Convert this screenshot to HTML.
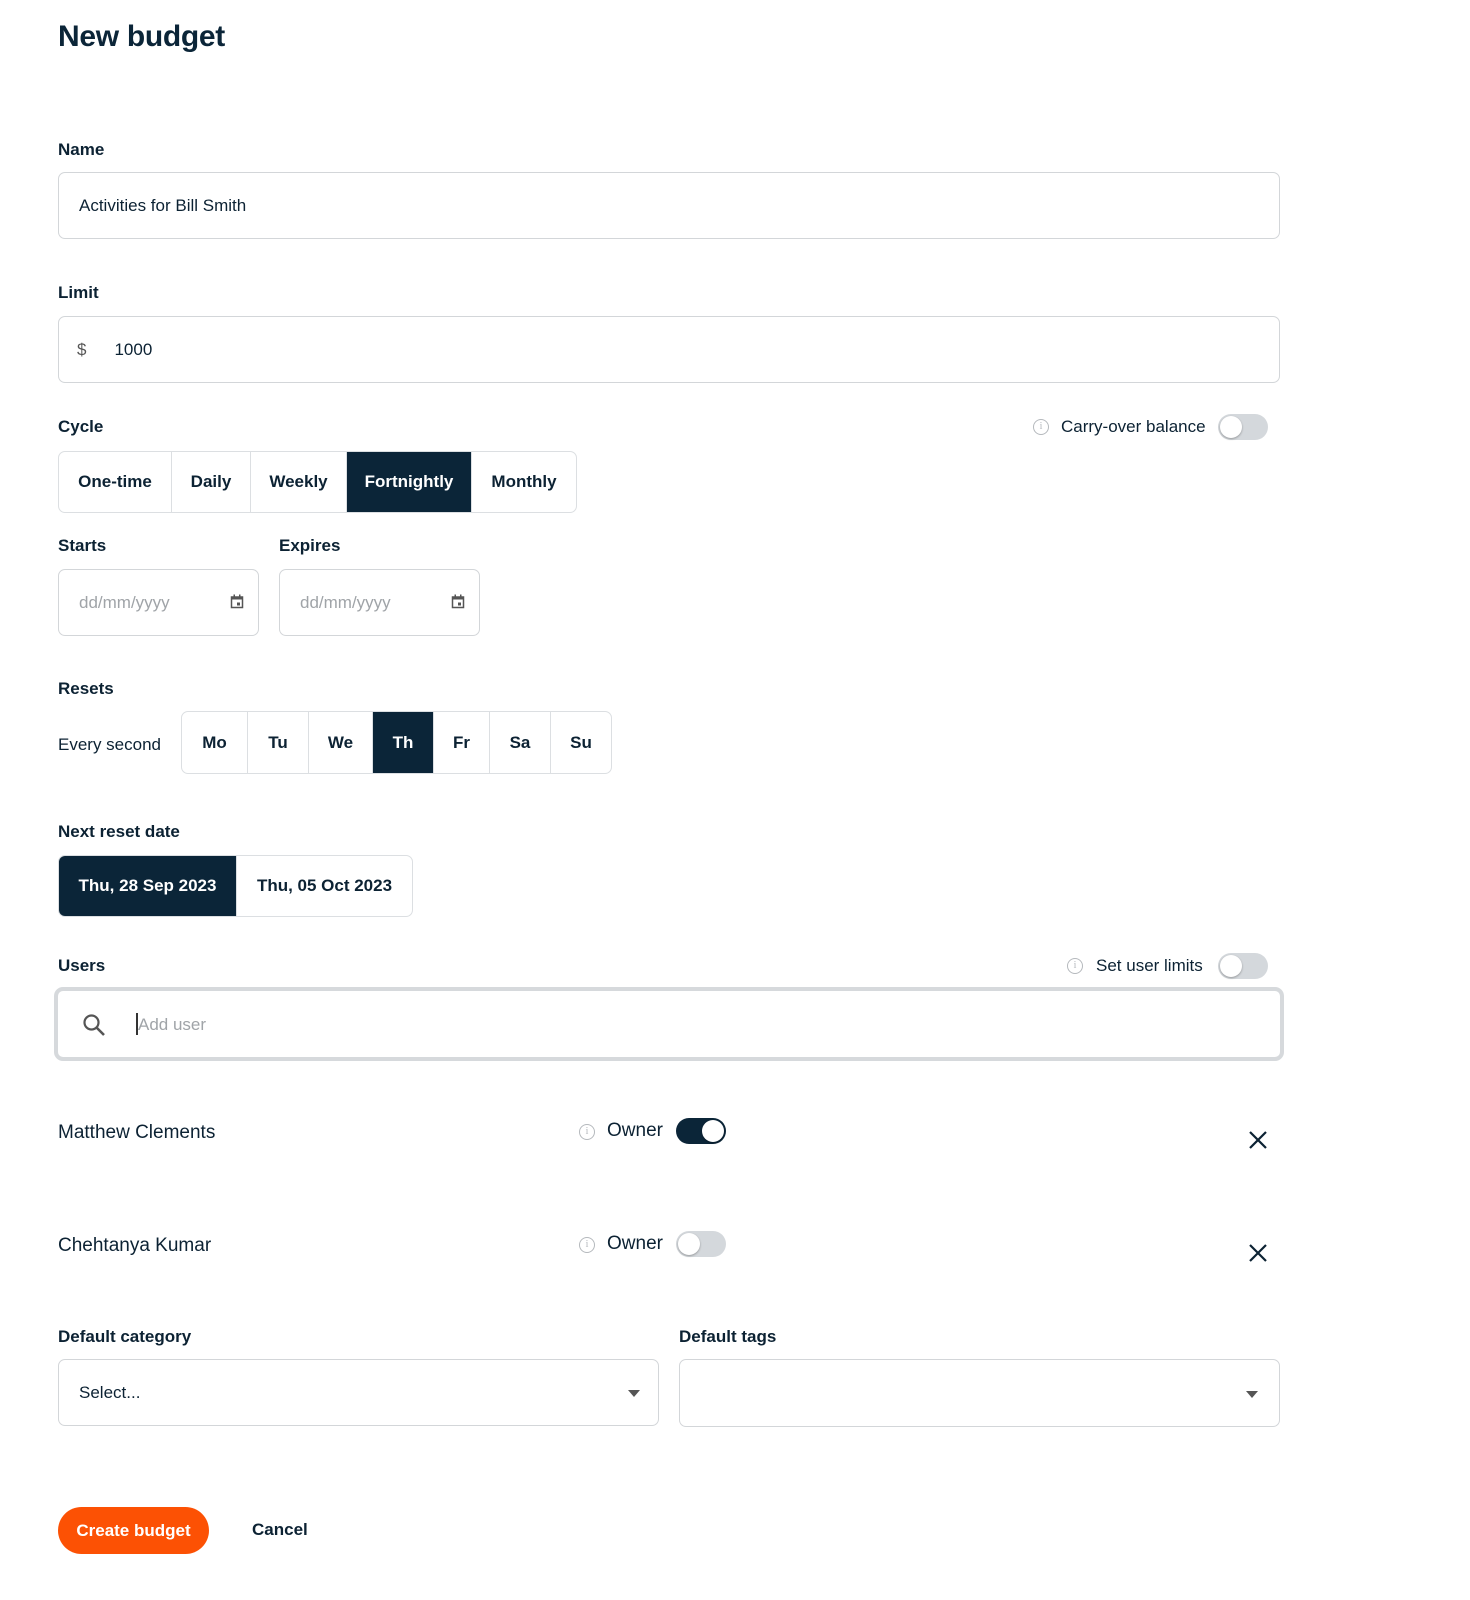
<!DOCTYPE html>
<html><head><meta charset="utf-8"><style>
*{box-sizing:border-box;margin:0;padding:0}
body{width:1470px;height:1600px;background:#fff;font-family:"Liberation Sans",Arial,sans-serif;color:#0c2233;position:relative;overflow:hidden}
.a{position:absolute}
h1{position:absolute;left:58px;top:20px;font-size:30px;font-weight:bold;color:#0b2538;letter-spacing:-0.3px}
.lbl{position:absolute;font-size:17px;font-weight:bold;color:#0c2233}
.inp{position:absolute;border:1px solid #d3d6d9;border-radius:7px;background:#fff;font-size:17px;display:flex;align-items:center}
.seg{position:absolute;display:flex;border:1px solid #dcdfe2;border-radius:7px;overflow:hidden}
.seg div{display:flex;align-items:center;justify-content:center;font-size:17px;font-weight:bold;border-right:1px solid #dcdfe2;height:100%}
.seg div:last-child{border-right:none}
.seg .on{background:#0b2538;color:#fff}
.tog{position:absolute;width:50px;height:26px;border-radius:13px;background:#d4d8dc}
.tog::after{content:"";position:absolute;left:2px;top:2px;width:22px;height:22px;border-radius:50%;background:#fff;box-shadow:0 1px 2px rgba(0,0,0,.3)}
.tog.on{background:#0b2538}.tog.on::after{left:26px}
.info{position:absolute;width:16px;height:16px;border:1.3px solid #b5b9bd;border-radius:50%;font-size:10px;color:#b5b9bd;text-align:center;line-height:14px;font-family:"Liberation Serif",serif}
.t{position:absolute;font-size:17px}
</style></head><body>
<h1>New budget</h1>

<div class="lbl" style="left:58px;top:140px">Name</div>
<div class="inp" style="left:58px;top:172px;width:1222px;height:67px;padding-left:20px">Activities for Bill Smith</div>

<div class="lbl" style="left:58px;top:283px">Limit</div>
<div class="inp" style="left:58px;top:316px;width:1222px;height:67px;padding-left:18px"><span style="color:#555">$</span><span style="margin-left:28px">1000</span></div>

<div class="lbl" style="left:58px;top:417px">Cycle</div>
<div class="info" style="left:1033px;top:419px">i</div>
<div class="t" style="left:1061px;top:417px">Carry-over balance</div>
<div class="tog" style="left:1218px;top:414px"></div>
<div class="seg" style="left:58px;top:451px;height:62px">
<div style="width:113px">One-time</div><div style="width:79px">Daily</div><div style="width:96px">Weekly</div><div class="on" style="width:125px">Fortnightly</div><div style="width:104px">Monthly</div></div>

<div class="lbl" style="left:58px;top:536px">Starts</div>
<div class="lbl" style="left:279px;top:536px">Expires</div>
<div class="inp" style="left:58px;top:569px;width:201px;height:67px;padding-left:20px;color:#a0a4a8">dd/mm/yyyy
<svg class="a" style="left:171px;top:24px" width="14" height="15" viewBox="0 0 14 15"><rect x="1.5" y="3" width="11" height="10.5" fill="none" stroke="#555" stroke-width="1.5"/><rect x="1.5" y="3" width="11" height="2.5" fill="#555"/><rect x="3.5" y="0.5" width="1.5" height="3" fill="#555"/><rect x="9" y="0.5" width="1.5" height="3" fill="#555"/><rect x="7" y="8.5" width="3" height="3" fill="#555"/></svg></div>
<div class="inp" style="left:279px;top:569px;width:201px;height:67px;padding-left:20px;color:#a0a4a8">dd/mm/yyyy
<svg class="a" style="left:171px;top:24px" width="14" height="15" viewBox="0 0 14 15"><rect x="1.5" y="3" width="11" height="10.5" fill="none" stroke="#555" stroke-width="1.5"/><rect x="1.5" y="3" width="11" height="2.5" fill="#555"/><rect x="3.5" y="0.5" width="1.5" height="3" fill="#555"/><rect x="9" y="0.5" width="1.5" height="3" fill="#555"/><rect x="7" y="8.5" width="3" height="3" fill="#555"/></svg></div>

<div class="lbl" style="left:58px;top:679px">Resets</div>
<div class="t" style="left:58px;top:735px">Every second</div>
<div class="seg" style="left:181px;top:711px;height:63px">
<div style="width:66px">Mo</div><div style="width:61px">Tu</div><div style="width:64px">We</div><div class="on" style="width:61px">Th</div><div style="width:56px">Fr</div><div style="width:61px">Sa</div><div style="width:60px">Su</div></div>

<div class="lbl" style="left:58px;top:822px">Next reset date</div>
<div class="seg" style="left:58px;top:855px;height:62px">
<div class="on" style="width:178px">Thu, 28 Sep 2023</div><div style="width:175px">Thu, 05 Oct 2023</div></div>

<div class="lbl" style="left:58px;top:956px">Users</div>
<div class="info" style="left:1067px;top:958px">i</div>
<div class="t" style="left:1096px;top:956px">Set user limits</div>
<div class="tog" style="left:1218px;top:953px"></div>
<div class="a" style="left:54px;top:987px;width:1230px;height:74px;border:4px solid #d6d9dc;border-radius:9px;background:#fff">
<svg class="a" style="left:24px;top:22px" width="24" height="24" viewBox="0 0 24 24"><circle cx="9.5" cy="9.5" r="7" fill="none" stroke="#555" stroke-width="2.2"/><path d="M14.5 14.5L22 22" stroke="#555" stroke-width="2.6"/></svg>
<div class="a" style="left:78px;top:22px;width:1.5px;height:22px;background:#333"></div>
<div class="t" style="left:80px;top:24px;color:#a0a4a8">Add user</div></div>

<div class="t" style="left:58px;top:1122px;font-size:19px;font-weight:500">Matthew Clements</div>
<div class="info" style="left:579px;top:1124px">i</div>
<div class="t" style="left:607px;top:1120px;font-size:19px">Owner</div>
<div class="tog on" style="left:676px;top:1118px"></div>
<svg class="a" style="left:1249px;top:1131px" width="18" height="18"><path d="M1 1L17 17M17 1L1 17" stroke="#0c2233" stroke-width="2.2"/></svg>

<div class="t" style="left:58px;top:1235px;font-size:19px">Chehtanya Kumar</div>
<div class="info" style="left:579px;top:1237px">i</div>
<div class="t" style="left:607px;top:1233px;font-size:19px">Owner</div>
<div class="tog" style="left:676px;top:1231px"></div>
<svg class="a" style="left:1249px;top:1244px" width="18" height="18"><path d="M1 1L17 17M17 1L1 17" stroke="#0c2233" stroke-width="2.2"/></svg>

<div class="lbl" style="left:58px;top:1327px">Default category</div>
<div class="lbl" style="left:679px;top:1327px">Default tags</div>
<div class="inp" style="left:58px;top:1359px;width:601px;height:67px;padding-left:20px">Select...
<svg class="a" style="left:569px;top:30px" width="12" height="7"><path d="M0 0H12L6 7Z" fill="#555"/></svg></div>
<div class="inp" style="left:679px;top:1359px;width:601px;height:68px">
<svg class="a" style="left:566px;top:31px" width="12" height="7"><path d="M0 0H12L6 7Z" fill="#555"/></svg></div>

<div class="a" style="left:58px;top:1507px;width:151px;height:47px;border-radius:24px;background:#fc5104;color:#fff;font-size:17px;font-weight:bold;display:flex;align-items:center;justify-content:center">Create budget</div>
<div class="t" style="left:252px;top:1520px;font-weight:bold">Cancel</div>
</body></html>
